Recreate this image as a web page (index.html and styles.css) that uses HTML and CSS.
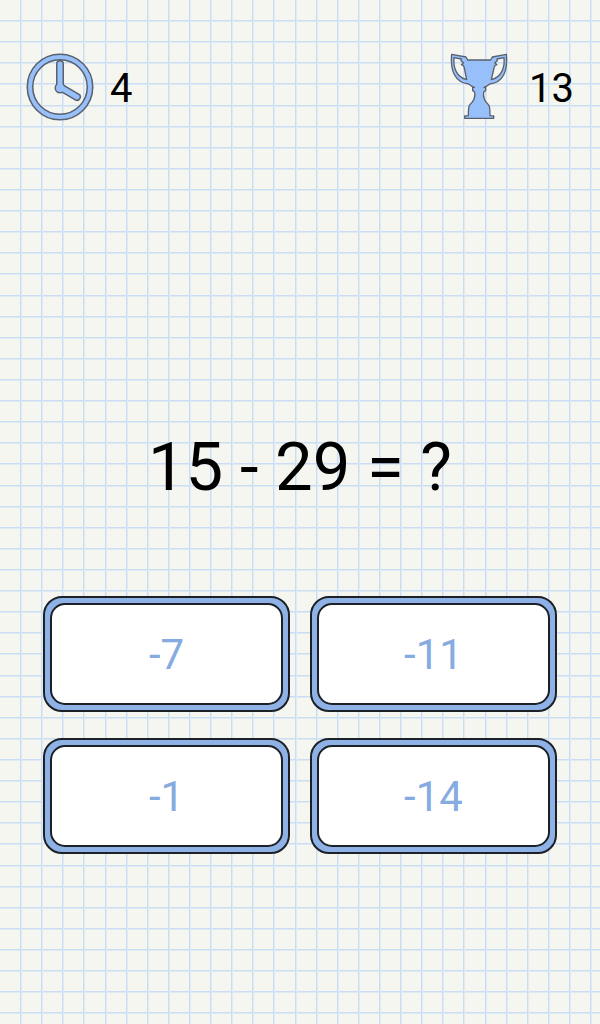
FILE: index.html
```html
<!DOCTYPE html>
<html lang="en">
<head>
  <meta charset="UTF-8">
  <meta name="viewport" content="width=device-width, initial-scale=1">
  <title>Math Quiz</title>
  <link rel="stylesheet" href="styles.css">
</head>
<body>

  <header class="status">
    <div class="stat">
      <svg class="icon" viewBox="0 0 68 68" role="img" aria-label="Time left">
        <circle class="ring-edge" cx="34" cy="34" r="30"/>
        <circle class="ring" cx="34" cy="34" r="30"/>
        <g class="hands-edge">
          <path d="M34 11V34L51 44"/>
          <circle cx="34" cy="35" r="1.5"/>
        </g>
        <g class="hands">
          <path d="M34 11V34L51 44"/>
          <circle cx="34" cy="35" r="1.5"/>
        </g>
      </svg>
      <span id="time">4</span>
    </div>
    <div class="stat">
      <svg class="icon" viewBox="15 39 204 204" role="img" aria-label="Score">
        <path class="cup" fill-rule="evenodd" d="M35 43L78 51L83 60H152L157 51L199 43C204 92 190 128 149 132Q141 139 132 142L137 143V152L131 156C128 172 134 184 146 195Q150 199 150 227L161 228V235H74V228L85 227Q85 199 89 195C101 184 107 172 104 156L98 152V143L103 142Q94 139 86 132C45 128 30 92 35 43ZM42 53C39 84 50 112 80 119L73 84L70 76L64 74L71 68L63 62L64 57ZM192 53C195 84 184 112 154 119L162 84L165 76L171 74L164 68L172 62L171 57Z"/>
      </svg>
      <span id="score">13</span>
    </div>
  </header>

  <main>
    <h1 class="question">15 - 29 = ?</h1>
    <div class="answers">
      <button type="button"><span>-7</span></button>
      <button type="button"><span>-11</span></button>
      <button type="button"><span>-1</span></button>
      <button type="button"><span>-14</span></button>
    </div>
  </main>

</body>
</html>
```
FILE: styles.css
```css
* {
  box-sizing: border-box;
}
body {
  --cell: calc(190px / 9);
  --line: #cbddf4;
  --line-soft: #e0eaf2;
  margin: 0;
  min-height: 100vh;
  display: flex;
  flex-direction: column;
  justify-content: space-between;
  font-family: Roboto, sans-serif;
  color: #000;
  /* squared paper */
  background-color: #f5f6ef;
  background-image:
    repeating-linear-gradient(to right, transparent 0 calc(var(--cell) - 2px), var(--line) calc(var(--cell) - 2px) calc(var(--cell) - 1px), var(--line-soft) calc(var(--cell) - 1px) var(--cell)),
    repeating-linear-gradient(to bottom, transparent 0 calc(var(--cell) - 2px), var(--line) calc(var(--cell) - 2px) calc(var(--cell) - 1px), var(--line-soft) calc(var(--cell) - 1px) var(--cell));
  background-position: 1px 1px;
}
.status {
  display: flex;
  justify-content: space-between;
  padding: 53px 26px 0;
}
.stat {
  display: flex;
  align-items: center;
  gap: 16px;
  font-size: 40px;
  line-height: 48px;
}
.stat span {
  padding-top: 4px;
}
.icon {
  width: 68px;
  height: 68px;
}
.ring-edge, .ring {
  fill: none;
  stroke: #59616e;
  stroke-width: 7;
}
.ring {
  stroke: #97c0fb;
  stroke-width: 4;
}
.hands-edge, .hands {
  fill: none;
  stroke: #59616e;
  stroke-width: 8;
  stroke-linecap: round;
  stroke-linejoin: round;
}
.hands {
  stroke: #97c0fb;
  stroke-width: 5;
}
.cup {
  fill: #97c0fb;
  stroke: #59616e;
  stroke-width: 4;
  stroke-linejoin: round;
}
main {
  padding: 0 43px 170px;
}
.question {
  margin: 0 0 89px;
  font-size: 67px;
  font-weight: 400;
  line-height: 80px;
  text-align: center;
}
.answers {
  display: grid;
  grid-template-columns: 1fr 1fr;
  gap: 26px 20px;
}
.answers button {
  display: flex;
  height: 116px;
  padding: 5px;
  border: 2px solid #1c2027;
  border-radius: 19px;
  background-color: #8fb2e6;
  color: #86abe0;
  font-family: inherit;
  font-size: 42px;
  cursor: pointer;
}
.answers span {
  flex: 1;
  align-self: stretch;
  display: flex;
  align-items: center;
  justify-content: center;
  border: 2px solid #1c2027;
  border-radius: 15px;
  background-color: #fff;
}
.answers button:active span {
  background-color: #e8f0fc;
}
```
